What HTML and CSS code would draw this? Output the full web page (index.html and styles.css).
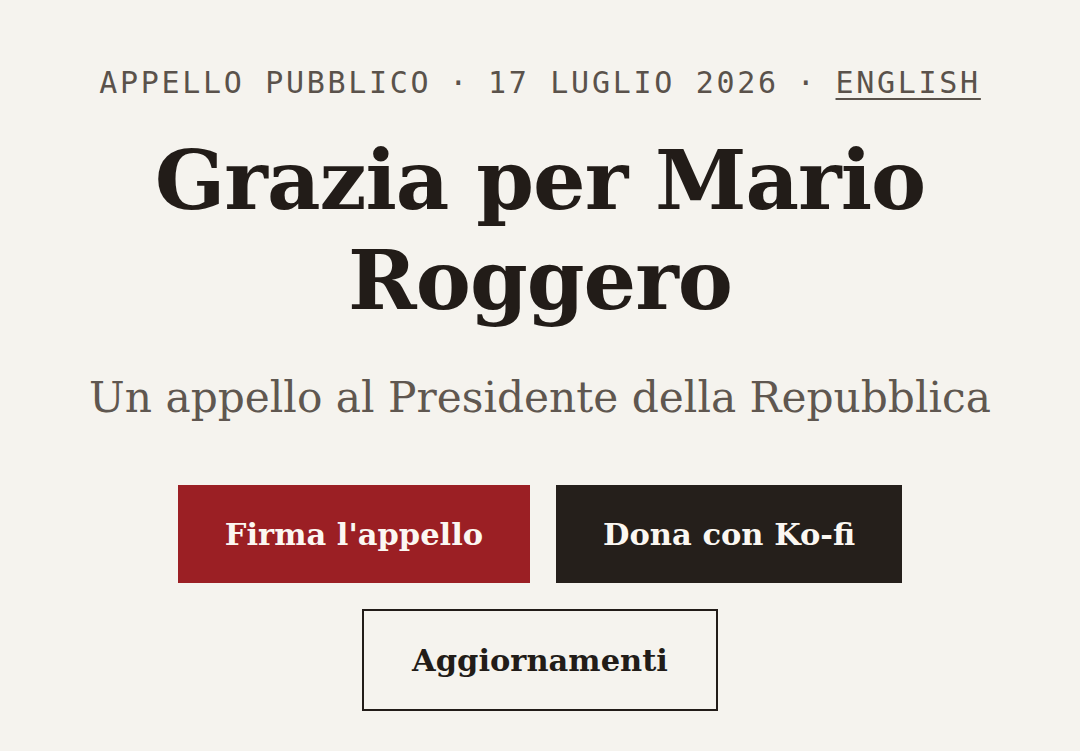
FILE: index.html
```html
<!doctype html>
<html lang="it">
  <head>
    <meta charset="UTF-8" />
    <meta name="viewport" content="width=device-width, initial-scale=1.0" />
    <title>Grazia per Mario Roggero</title>
    <link rel="stylesheet" href="styles.css">
  </head>
  <body>
    <header class="hero">
      <p class="kicker">
        <span>Appello pubblico</span>
        <span class="dot">·</span>
        <span>17 luglio 2026</span>
        <span class="dot">·</span>
        <a href="#" class="lang">English</a>
      </p>
      <h1>Grazia per Mario Roggero</h1>
      <p class="subtitle">Un appello al Presidente della Repubblica</p>
      <div class="actions">
        <a href="#" class="btn btn-red">Firma l'appello</a>
        <a href="#" class="btn btn-dark">Dona con Ko-fi</a>
        <a href="#" class="btn btn-outline">Aggiornamenti</a>
      </div>
    </header>
  </body>
</html>
```

FILE: styles.css
```css
/* Page */
body {
  margin: 0;
  background-color: #f5f3ee;
  color: #221c18;
  font-family: "DejaVu Serif", "Liberation Serif", serif;
}

.hero {
  display: flex;
  flex-direction: column;
  align-items: center;
  text-align: center;
  padding: 65px 40px 0;
}

/* Top line */
.kicker {
  margin: 0;
  font-family: "DejaVu Sans Mono", "Liberation Mono", monospace;
  font-size: 30px;
  letter-spacing: 2.7px;
  text-transform: uppercase;
  color: #5a524b;
  display: flex;
  gap: 18px;
}

.kicker .lang {
  color: #5a524b;
  text-decoration: underline;
  text-underline-offset: 5px;
  text-decoration-thickness: 2px;
}

h1 {
  margin: 30px 0 0;
  font-size: 82.7px;
  line-height: 100px;
  font-weight: bold;
  letter-spacing: -1px;
  max-width: 820px;
}

.subtitle {
  margin: 43px 0 0;
  font-size: 42.3px;
  font-weight: 300;
  color: #5f5750;
}

/* Buttons */
.actions {
  display: flex;
  flex-wrap: wrap;
  justify-content: center;
  gap: 26px;
  max-width: 760px;
  margin-top: 63px;
}

.btn {
  display: inline-flex;
  align-items: center;
  justify-content: center;
  height: 98px;
  padding: 0 47px;
  box-sizing: border-box;
  font-size: 30.5px;
  font-weight: bold;
  text-decoration: none;
}

.btn-red {
  background-color: #9b1f24;
  color: #fbf7f2;
}

.btn-dark {
  background-color: #251f1b;
  color: #fbf7f2;
}

.btn-outline {
  height: 102px;
  padding: 0 48px;
  border: 2px solid #221c18;
  color: #221c18;
}
```
